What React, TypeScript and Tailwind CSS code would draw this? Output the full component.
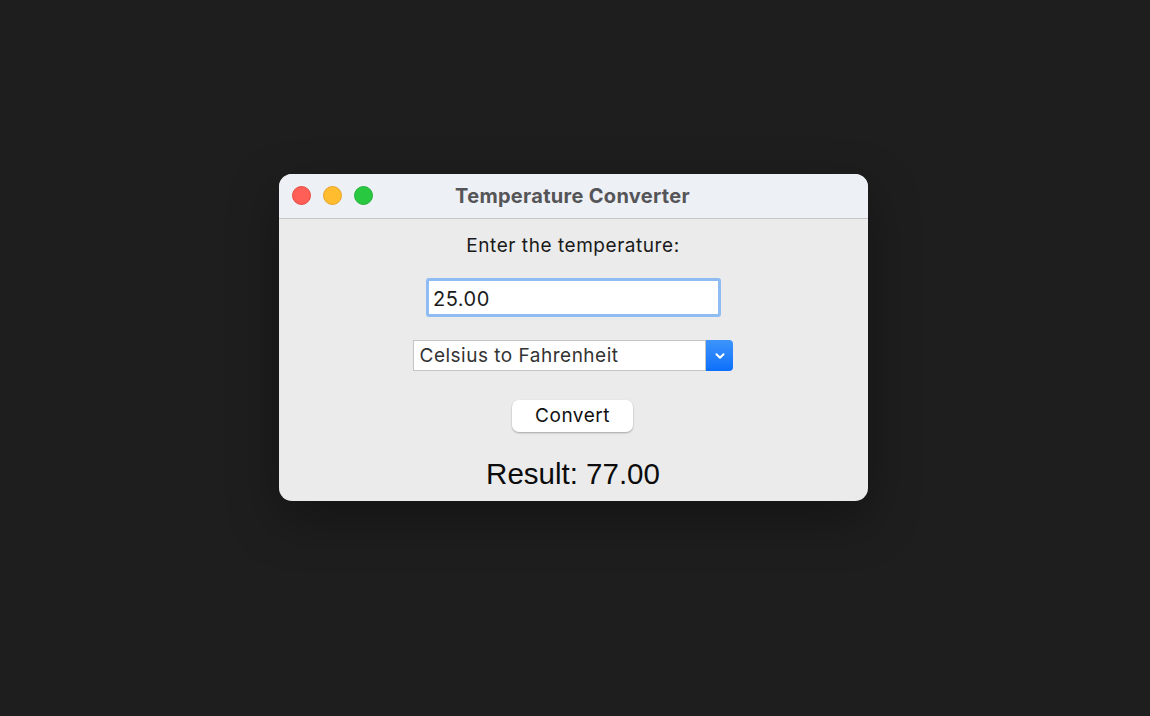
import { ChevronDown } from "lucide-react";

const sans = "font-['Inter','Liberation_Sans',sans-serif]";

export default function App() {
  return (
    <div className={`h-[716px] w-[1150px] overflow-hidden bg-[#1e1e1e] pl-[279px] pt-[174px] ${sans}`}>
      <div className="flex h-[327px] w-[589px] flex-col overflow-hidden rounded-[13px] bg-[#ebebeb] shadow-[0_18px_50px_rgba(0,0,0,0.35)]">
        <header className="relative flex h-[45px] shrink-0 items-center justify-center border-b border-[#c6c6c6] bg-[#edf0f5]">
          <div className="absolute left-[12.5px] top-[12px] flex gap-[12px]">
            <span className="size-[19px] rounded-full border border-[#e9493f] bg-[#ff5f57]" />
            <span className="size-[19px] rounded-full border border-[#e5a427] bg-[#febc2e]" />
            <span className="size-[19px] rounded-full border border-[#24b03a] bg-[#28c840]" />
          </div>
          <h1 className="mr-[2px] pb-[1px] text-[20px] font-bold leading-none tracking-[0.3px] text-[#555558]">Temperature Converter</h1>
        </header>
        <main className="flex flex-1 flex-col items-center text-black">
          <p className="mt-[15px] mr-[1px] h-[24px] text-[19px] leading-[24px] tracking-[0.55px] text-[#1a1a1a]">Enter the temperature:</p>
          <div className="mt-[20px] flex h-[39px] w-[295px] items-center rounded-[3px] border-[3px] border-[#8fbdf3] bg-white px-[4px] pt-[2px] text-[20px] tracking-[0.5px] text-[#1c1c1c]">25.00</div>
          <div className="mt-[23px] mr-[2px] flex h-[31px] w-[320px] items-stretch">
            <div className="flex flex-1 items-center border border-[#c4c4c4] bg-white pl-[6px] pt-[1px] text-[19px] tracking-[0.5px] text-[#333333]">Celsius to Fahrenheit</div>
            <div className="flex w-[27px] items-center justify-center rounded-r-[4px] bg-gradient-to-b from-[#3d94fb] to-[#0a6ffb] pl-[1px]">
              <ChevronDown className="size-[14px] text-white" strokeWidth={3.5} />
            </div>
          </div>
          <button className="mt-[29px] mr-[2px] h-[32px] w-[121px] rounded-[7px] bg-white pb-[2px] text-[19px] leading-none tracking-[0.5px] text-[#111111] shadow-[0_1px_2px_rgba(0,0,0,0.3)]">Convert</button>
          <p className="mt-[24px] mr-[1px] font-['Liberation_Sans',sans-serif] text-[29.5px] leading-[36px] text-[#0c0c0c]">Result: 77.00</p>
        </main>
      </div>
    </div>
  );
}
